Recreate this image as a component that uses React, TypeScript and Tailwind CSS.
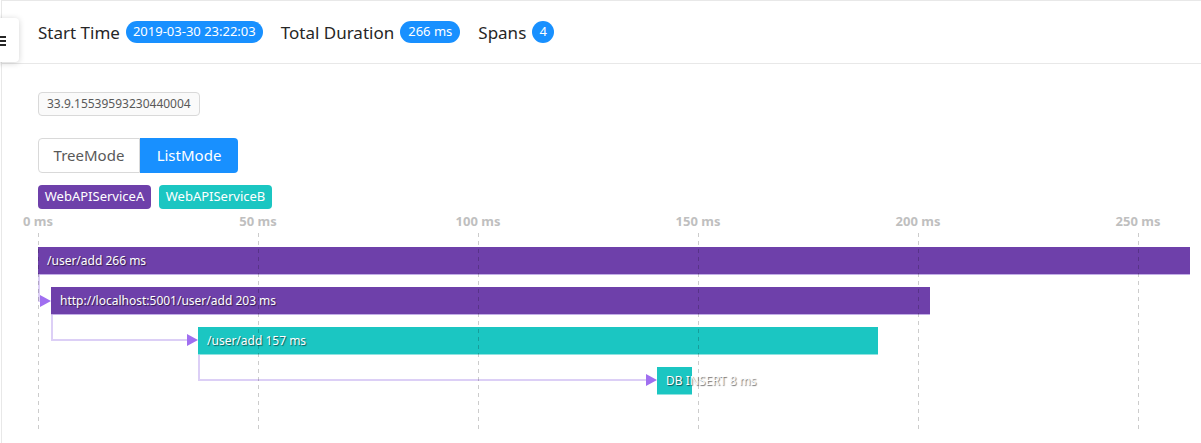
import React from "react";

const PX_PER_MS = 4.4;
const ticks = [0, 50, 100, 150, 200, 250];

type Span = { label: string; left: number; width: number; color: string; edge: string };
const spans: Span[] = [
  { label: "/user/add 266 ms", left: 0, width: 1152, color: "bg-[#6e40aa]", edge: "border-[#c2aee6]" },
  { label: "http://localhost:5001/user/add 203 ms", left: 13, width: 879, color: "bg-[#6e40aa]", edge: "border-[#c2aee6]" },
  { label: "/user/add 157 ms", left: 160, width: 680, color: "bg-[#1bc6c2]", edge: "border-[#8fe3e0]" },
  { label: "DB INSERT 8 ms", left: 619, width: 35, color: "bg-[#1bc6c2]", edge: "border-[#8fe3e0]" },
];

export default function App() {
  return (
    <div
      className="relative h-[443px] w-[1201px] overflow-hidden bg-white pl-[1px] text-[#262626]"
      style={{ fontFamily: '"Segoe UI", "Noto Sans", "Open Sans", sans-serif' }}
    >
      <div className="h-full border-l border-t border-[#e8e8e8]">
        {/* header */}
        <div className="flex h-[63px] items-center gap-[18px] border-b border-[#e8e8e8] pl-[36px]">
          <div className="flex items-center gap-[6px]">
            <span className="text-[17px] leading-none">Start Time</span>
            <span className="flex h-[22px] items-center rounded-full bg-[#1890ff] px-[7px] text-[13px] text-white">
              2019-03-30 23:22:03
            </span>
          </div>
          <div className="flex items-center gap-[6px]">
            <span className="text-[17px] leading-none">Total Duration</span>
            <span className="flex h-[22px] items-center rounded-full bg-[#1890ff] px-[8px] text-[13px] text-white">
              266 ms
            </span>
          </div>
          <div className="flex items-center gap-[6px]">
            <span className="text-[17px] leading-none">Spans</span>
            <span className="flex h-[22px] w-[22px] items-center justify-center rounded-full bg-[#1890ff] text-[13px] text-white">
              4
            </span>
          </div>
        </div>

        {/* body */}
        <div className="pl-[36px] pt-[26px]">
          <div className="inline-flex h-[24px] items-center rounded-[4px] border border-[#d9d9d9] bg-[#fafafa] px-[8px] text-[12px] text-[#595959]">
            33.9.15539593230440004
          </div>

          <div className="mt-[22px] flex h-[35px] text-[15px]">
            <div className="flex w-[102px] items-center justify-center rounded-l-[4px] border border-[#d9d9d9] text-[#595959]">
              TreeMode
            </div>
            <div className="flex w-[98px] items-center justify-center rounded-r-[4px] bg-[#1890ff] text-white">
              ListMode
            </div>
          </div>

          <div className="mt-[12px] flex gap-[8px] text-[13px] text-white">
            <div className="flex h-[24px] w-[113px] items-center justify-center rounded-[4px] bg-[#6e40aa]">
              WebAPIServiceA
            </div>
            <div className="flex h-[24px] w-[113px] items-center justify-center rounded-[4px] bg-[#1bc6c2]">
              WebAPIServiceB
            </div>
          </div>

          {/* axis */}
          <div className="relative h-[24px]">
            {ticks.map((t) => (
              <span
                key={t}
                className="absolute top-[3px] -translate-x-1/2 whitespace-nowrap text-[13px] font-bold leading-[18px] text-[#bfbfbf]"
                style={{ left: t * PX_PER_MS }}
              >
                {t} ms
              </span>
            ))}
          </div>

          {/* chart */}
          <div className="relative h-[211px]">
            <div className="flex flex-col gap-[12px] pt-[14px]">
              {spans.map((s) => (
                <div key={s.label} className="h-[28px]">
                  <div
                    className={`flex h-[28px] items-center border-b ${s.color} ${s.edge} pl-[9px] text-[12px] whitespace-nowrap text-white [text-shadow:1px_1px_1px_rgba(0,0,0,0.55)]`}
                    style={{ marginLeft: s.left, width: s.width }}
                  >
                    {s.label}
                  </div>
                </div>
              ))}
            </div>

            {/* connectors */}
            <svg className="pointer-events-none absolute left-0 top-0" width="1163" height="211">
              <g stroke="#dccff6" strokeWidth="2" fill="none">
                <path d="M1 42 V68 H3" />
                <path d="M14 82 V107 H151" />
                <path d="M161 122 V147 H610" />
              </g>
              <g fill="#a06ff0">
                <polygon points="2,62 13,68 2,74" />
                <polygon points="149,101 160,107 149,113" />
                <polygon points="608,141 619,147 608,153" />
              </g>
            </svg>

            {/* grid lines */}
            <svg className="pointer-events-none absolute left-0 top-0" width="1163" height="211">
              {ticks.map((t) => (
                <line
                  key={t}
                  x1={t * PX_PER_MS + 0.5}
                  x2={t * PX_PER_MS + 0.5}
                  y1="0"
                  y2="200"
                  stroke="rgba(0,0,0,0.2)"
                  strokeWidth="1"
                  strokeDasharray="4 4"
                />
              ))}
            </svg>
          </div>
        </div>
      </div>

      {/* floating toggle */}
      <div className="absolute left-[-22px] top-[18px] flex h-[44px] w-[41px] items-center justify-center rounded-[4px] bg-white shadow-[0_1px_6px_rgba(0,0,0,0.18)]">
        <svg width="14" height="12" viewBox="0 0 14 12" className="mt-[2px]">
          <rect x="0" y="1" width="14" height="2" fill="#262626" />
          <rect x="0" y="5" width="14" height="2" fill="#262626" />
          <rect x="0" y="9" width="14" height="2" fill="#262626" />
        </svg>
      </div>
    </div>
  );
}
